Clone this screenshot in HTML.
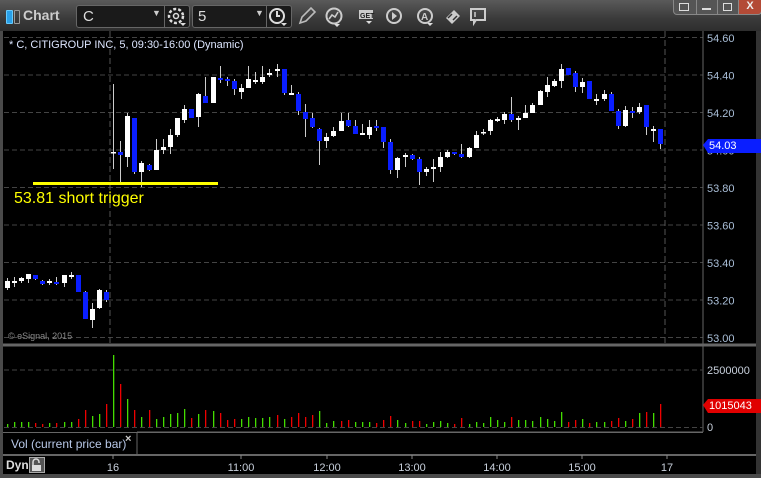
<!DOCTYPE html>
<html><head><meta charset="utf-8">
<style>
html,body{margin:0;padding:0;background:#000;}
body{width:761px;height:478px;overflow:hidden;position:relative;font-family:"Liberation Sans",sans-serif;}
.tb{position:absolute;left:0;top:0;width:761px;height:31px;background:linear-gradient(#5a5a5a,#3a3a3a 60%,#2e2e2e);}
.box{position:absolute;top:5px;height:21px;background:#1a1a1a;border:1px solid #666;border-radius:3px;color:#ddd;font-size:15px;}
.frame{position:absolute;background:#4a4a4a;}
</style></head><body>
<div class="tb">
  <div style="position:absolute;left:6px;top:10px;width:5px;height:12px;background:#2aa0e8;border:1px solid #6cf;border-radius:1px"></div>
  <div style="position:absolute;left:14px;top:10px;width:4px;height:12px;border:1px solid #999;border-radius:1px"></div>
  <div style="position:absolute;left:23px;top:7px;color:#ccc;font-size:14px;font-weight:bold">Chart</div>
  <div class="box" style="left:76px;width:112px;"><span style="position:absolute;left:6px;top:2px">C</span><span style="position:absolute;left:75px;top:2px;font-size:9px;color:#ccc">▼</span><div style="position:absolute;left:87px;top:0;width:1px;height:21px;background:#666"></div>
   <svg style="position:absolute;left:90px;top:1px" width="20" height="20" viewBox="0 0 20 20"><circle cx="9" cy="9" r="7" fill="none" stroke="#ddd" stroke-width="2.5" stroke-dasharray="3 2"/><circle cx="9" cy="9" r="2.5" fill="none" stroke="#ddd" stroke-width="1.5"/><path d="M13 16h6l-3 3z" fill="#ddd"/></svg></div>
  <div class="box" style="left:192px;width:98px;"><span style="position:absolute;left:5px;top:2px">5</span><span style="position:absolute;left:62px;top:2px;font-size:9px;color:#ccc">▼</span><div style="position:absolute;left:73px;top:0;width:1px;height:21px;background:#666"></div>
   <svg style="position:absolute;left:75px;top:1px" width="20" height="20" viewBox="0 0 20 20"><circle cx="9" cy="9" r="7" fill="none" stroke="#ddd" stroke-width="2"/><path d="M9 4v5h3" fill="none" stroke="#ddd" stroke-width="2"/><path d="M13 16h6l-3 3z" fill="#ddd"/></svg></div>
  <svg style="position:absolute;left:296px;top:5px" width="210" height="22" viewBox="0 0 210 22">
   <path d="M4 18l2-6 9-9 4 4-9 9z" fill="none" stroke="#bbb" stroke-width="1.6"/>
   <circle cx="38" cy="11" r="7.5" fill="none" stroke="#ccc" stroke-width="2"/><path d="M33 14l3-4 3 2 3-5" fill="none" stroke="#ccc" stroke-width="1.6"/><path d="M38 19h6l-3 3z" fill="#ddd"/>
   <rect x="63" y="5" width="14" height="9" fill="#ccc"/><text x="64" y="13" font-size="7" font-family="Liberation Sans" font-weight="bold" fill="#222">GET</text><path d="M70 16h6l-3 3z" fill="#ddd"/>
   <circle cx="98" cy="11" r="7" fill="none" stroke="#ccc" stroke-width="2"/><path d="M96 7l5 4-5 4z" fill="#ccc"/>
   <circle cx="129" cy="11" r="7" fill="none" stroke="#ccc" stroke-width="2"/><text x="125" y="15" font-size="10" font-family="Liberation Sans" font-weight="bold" fill="#ccc">A</text><path d="M131 18h6l-3 3z" fill="#ddd"/>
   <path d="M150 13l8-8 6 6-8 8z" fill="#ccc"/><path d="M152 13l4-4 M157 15l4-4" stroke="#333" stroke-width="1.5"/>
   <path d="M175 4h14v11h-9l-2 3v-3h-3z" fill="none" stroke="#ccc" stroke-width="2"/><path d="M179 7v5" stroke="#ccc" stroke-width="1.5"/>
  </svg>
  <div style="position:absolute;left:673px;top:0;width:88px;height:14px;">
   <div style="position:absolute;left:0;top:0;width:22px;height:14px;background:#555;border:1px solid #888;border-top:none;border-radius:0 0 0 4px"></div>
   <div style="position:absolute;left:23px;top:0;width:20px;height:14px;background:#555;border:1px solid #888;border-top:none"></div>
   <div style="position:absolute;left:44px;top:0;width:20px;height:14px;background:#555;border:1px solid #888;border-top:none"></div>
   <div style="position:absolute;left:65px;top:0;width:22px;height:14px;background:#b34a36;border:1px solid #888;border-top:none;border-radius:0 0 4px 0;color:#eee;font-size:11px;font-weight:bold;text-align:center;line-height:13px">X</div>
   <div style="position:absolute;left:29px;top:8px;width:9px;height:2px;background:#ddd"></div>
   <div style="position:absolute;left:50px;top:3px;width:7px;height:6px;border:1px solid #ddd"></div>
   <div style="position:absolute;left:6px;top:3px;width:8px;height:6px;border:1px solid #ddd"></div>
  </div>
</div>
<div class="frame" style="left:0;top:31px;width:3px;height:447px"></div>
<div class="frame" style="left:756px;top:31px;width:5px;height:447px;background:#333"></div>
<div class="frame" style="left:0;top:474px;width:761px;height:4px"></div>
<svg id="ch" style="position:absolute;left:0;top:0" width="761" height="478" font-family="Liberation Sans"></svg>
<script>
const s=document.getElementById('ch');let h='';
const L=(x1,y1,x2,y2,c,w,d)=>h+=`<line x1="${x1}" y1="${y1}" x2="${x2}" y2="${y2}" stroke="${c}" stroke-width="${w||1}" ${d?'stroke-dasharray="'+d+'"':''}/>`;
const T=(x,y,t,c,sz,extra)=>h+=`<text x="${x}" y="${y}" fill="${c}" font-size="${sz}" ${extra||''}>${t}</text>`;
// grid
const pr=['54.60','54.40','54.20','54.00','53.80','53.60','53.40','53.20','53.00'];
pr.forEach((p,i)=>{const y=37.5+i*37.5;L(4,y,703,y,'#444',1,'5 3');});
L(110,31,110,345,'#555',1,'6 3');L(665,31,665,345,'#555',1,'6 3');
L(703,31,703,432,'#666',1);
L(3,345,756,345,'#666',3);
L(4,370,703,370,'#444',1,'5 3');L(4,427.5,703,427.5,'#444',1,'5 3');
L(3,432.5,703,432.5,'#666',1);L(3,455,756,455,'#666',2);L(137,432,137,455,'#666',1);
L(137,432,703,432,'#666',1);
// price labels
pr.forEach((p,i)=>{if(i!=3)T(707,42+i*37.5,p,'#aabfd8',11);});
T(707,42+3*37.5,'54.00','#aabfd8',11);
// candles: [x, bodyTop, bodyBot, wickTop, wickBot, blue?]
const pd=[[7,281,288,278,290,0],[14,281,283,277,287,0],[21,278,281,277,283,0],[28,274,279,274,283,0],[35,275,279,275,280,1],[42,281,284,280,285,1],[49,281,283,279,285,0],[56,282,284,277,285,1],[64,275,283,275,287,0],[71,275,277,272,279,0],[78,275,292,275,292,1],[85,292,319,291,319,1],[92,309,320,303,328,0],[99,290,308,289,309,0],[106,292,300,290,302,1]];
const d=[[152,153,84,169,0],[152,155,141,182,1],[116,157,113,167,0],[118,172,118,174,1],[163,172,161,187,0],[165,170,164,171,1],[150,170,139,170,0],[147,150,139,154,0],[135,147,129,154,0],[118,135,118,137,0],[109,120,105,123,0],[109,118,109,118,1],[94,117,93,127,0],[96,103,77,103,1],[77,103,77,103,0],[78,80,66,83,1],[79,81,77,86,1],[81,89,79,95,1],[88,92,84,99,0],[79,88,66,88,0],[80,82,72,84,0],[77,82,66,84,0],[73,75,69,77,0],[69,71,64,77,0],[69,93,69,95,1],[93,95,85,95,0],[94,111,92,115,1],[112,119,104,137,1],[118,127,113,128,1],[129,141,128,165,1],[137,141,133,148,0],[131,136,127,137,0],[121,131,113,131,0],[120,126,113,127,1],[126,134,120,134,1],[133,135,124,135,0],[127,135,120,139,0],[126,128,120,131,1],[127,142,127,148,1],[142,170,139,174,1],[158,170,157,178,0],[155,157,153,167,0],[155,159,154,160,1],[159,172,157,185,1],[169,172,167,176,0],[167,169,159,182,0],[157,167,152,172,0],[152,157,150,158,0],[152,154,152,155,1],[154,157,144,158,1],[148,157,147,158,0],[135,148,131,148,0],[132,133,129,135,0],[120,131,119,135,0],[119,121,117,122,0],[114,120,112,124,0],[114,120,97,122,1],[118,120,116,130,0],[113,118,105,118,0],[105,113,103,113,0],[91,105,90,105,0],[85,92,77,97,0],[81,86,79,87,0],[69,81,64,88,0],[68,75,68,75,1],[73,87,71,92,1],[82,87,78,93,0],[81,99,81,99,1],[99,101,94,105,0],[94,99,90,101,0],[94,111,92,111,1],[111,126,109,129,1],[110,126,106,127,0],[111,113,107,118,1],[107,112,103,114,0],[105,127,105,135,1],[129,131,126,142,0],[129,144,129,149,1]];
const all=pd.map(c=>c.slice()).concat(d.map((c,i)=>[113+i*7.11].concat(c)));
all.forEach(c=>{const x=Math.round(c[0]);const col=c[5]?'#0a1eff':'#fff';
 L(x+0.5,c[3],x+0.5,c[4],'#ccc',1);
 h+=`<rect x="${x-2}" y="${c[1]}" width="5" height="${Math.max(1.5,c[2]-c[1])}" fill="${col}"/>`;});
// trigger
h+=`<rect x="33" y="182" width="185" height="3" fill="#ffff00"/>`;
T(14,203,'53.81 short trigger','#ffff00',16);
T(9,48,'* C, CITIGROUP INC, 5, 09:30-16:00 (Dynamic)','#dde6ff',11);
T(8,339,'© eSignal, 2015','#888',9);
// blue price tag
h+=`<path d="M703 145l5-6h53v14h-53z" fill="#0a1eff"/>`;T(709,149,'54.03','#fff',11);
// volume
const pv=[[3,'g'],[5,'g'],[5,'g'],[5,'g'],[4,'r'],[3,'r'],[4,'g'],[4,'r'],[5,'g'],[5,'g'],[8,'r'],[17,'r'],[11,'g'],[13,'g'],[23,'r']];
const dv=[[72,'g'],[43,'r'],[28,'g'],[17,'r'],[10,'g'],[17,'r'],[8,'g'],[10,'g'],[13,'g'],[14,'g'],[18,'g'],[9,'r'],[13,'g'],[17,'r'],[16,'g'],[14,'r'],[7,'r'],[8,'r'],[8,'g'],[10,'g'],[9,'g'],[9,'g'],[10,'g'],[12,'r'],[8,'g'],[10,'r'],[14,'r'],[10,'r'],[12,'r'],[16,'g'],[4,'g'],[6,'g'],[6,'r'],[7,'r'],[5,'g'],
[5,'g'],[5,'g'],[4,'r'],[7,'r'],[11,'r'],[7,'g'],[4,'g'],[6,'r'],[6,'r'],[3,'g'],[5,'g'],[6,'g'],[4,'g'],[3,'r'],[9,'r'],[3,'g'],[5,'g'],[4,'g'],[10,'g'],[7,'g'],[5,'g'],[10,'r'],[7,'g'],[7,'g'],[6,'g'],[10,'g'],[8,'g'],[6,'g'],[15,'g'],[5,'r'],[7,'r'],[8,'g'],[4,'r'],[5,'g'],[5,'g'],[6,'r'],[9,'r'],[6,'g'],[8,'r'],[14,'g'],[15,'r'],[14,'g'],[23,'r']];
const vb=(x,v)=>{x=Math.round(x);h+=`<rect x="${x}" y="${427-v[0]}" width="1.3" height="${v[0]}" fill="${v[1]=='g'?'#44dd00':'#ee0000'}"/>`;};
pv.forEach((v,i)=>vb(pd[i][0],v));dv.forEach((v,i)=>vb(113+i*7.11,v));
T(707,374,'2500000','#c8d0dc',11);T(707,431,'0','#c8d0dc',11);
h+=`<path d="M703 405l5-6h53v14h-53z" fill="#e00000"/>`;T(709,409,'1015043','#fff',11);
T(11,448,'Vol (current price bar)','#b8c8e8',12);T(125,442,'×','#ccc',11,'font-weight="bold"');
// bottom axis
T(6,469,'Dyn','#ddd',12,'font-weight="bold"');
h+=`<rect x="29.5" y="457.5" width="15" height="15" fill="#555" stroke="#aaa"/><path d="M33 465v-3a3 3 0 0 1 6 0v1" fill="none" stroke="#ddd" stroke-width="1.5"/><rect x="32" y="465" width="9" height="6" fill="#ddd"/>`;
[[113,'16'],[241,'11:00'],[327,'12:00'],[412,'13:00'],[497,'14:00'],[582,'15:00'],[667,'17']].forEach(a=>{L(a[0],455,a[0],459,'#888',1);T(a[0],471,a[1],'#c8d0dc',11,'text-anchor="middle"');});
s.innerHTML=h;
</script>
</body></html>
